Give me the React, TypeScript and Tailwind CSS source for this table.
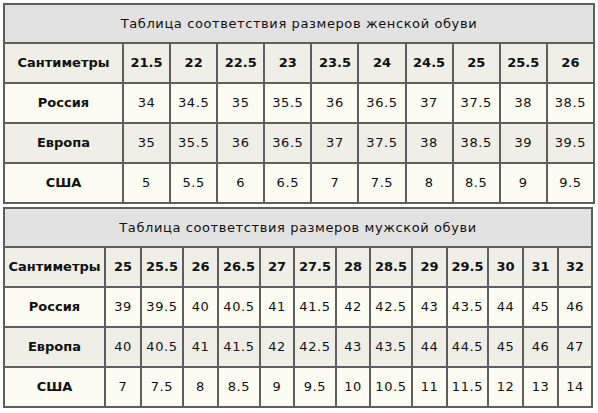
import React from "react";

const font = { fontFamily: '"DejaVu Sans", Verdana, sans-serif' };

type Row = { label: string; values: string[]; bg: string; bold?: boolean };

function SizeTable({
  title,
  rows,
  firstW,
  colW,
}: {
  title: string;
  rows: Row[];
  firstW: string;
  colW: string[];
}) {
  const n = rows[0].values.length;
  return (
    <table className="w-[590px] table-fixed border-collapse border-2 border-[#5e5e5e] text-[13px] text-[#111]">
      <colgroup>
        <col className={firstW} />
        {colW.map((c, i) => (
          <col key={i} className={c} />
        ))}
      </colgroup>
      <tbody>
        <tr className="h-[39px] bg-[#e2e2e2]">
          <td colSpan={n + 1} className="border-2 border-[#5e5e5e] text-center align-middle tracking-[0.6px]">
            {title}
          </td>
        </tr>
        {rows.map((r, ri) => (
          <tr key={ri} className={`h-[40px] ${r.bg}`}>
            <td className="border-2 border-[#5e5e5e] text-center align-middle font-bold">
              {r.label}
            </td>
            {r.values.map((v, vi) => (
              <td
                key={vi}
                className={`border-2 border-[#5e5e5e] text-center align-middle whitespace-nowrap ${
                  r.bold ? "font-bold" : "font-normal tracking-[0.6px]"
                }`}
              >
                {v}
              </td>
            ))}
          </tr>
        ))}
      </tbody>
    </table>
  );
}

export default function App() {
  const hdr = "bg-[#efefe7]";
  const cream = "bg-[#fcfcf2]";
  const women: Row[] = [
    { label: "Сантиметры", values: ["21.5", "22", "22.5", "23", "23.5", "24", "24.5", "25", "25.5", "26"], bg: hdr, bold: true },
    { label: "Россия", values: ["34", "34.5", "35", "35.5", "36", "36.5", "37", "37.5", "38", "38.5"], bg: cream },
    { label: "Европа", values: ["35", "35.5", "36", "36.5", "37", "37.5", "38", "38.5", "39", "39.5"], bg: hdr },
    { label: "США", values: ["5", "5.5", "6", "6.5", "7", "7.5", "8", "8.5", "9", "9.5"], bg: cream },
  ];
  const men: Row[] = [
    { label: "Сантиметры", values: ["25", "25.5", "26", "26.5", "27", "27.5", "28", "28.5", "29", "29.5", "30", "31", "32"], bg: hdr, bold: true },
    { label: "Россия", values: ["39", "39.5", "40", "40.5", "41", "41.5", "42", "42.5", "43", "43.5", "44", "45", "46"], bg: cream },
    { label: "Европа", values: ["40", "40.5", "41", "41.5", "42", "42.5", "43", "43.5", "44", "44.5", "45", "46", "47"], bg: hdr },
    { label: "США", values: ["7", "7.5", "8", "8.5", "9", "9.5", "10", "10.5", "11", "11.5", "12", "13", "14"], bg: cream },
  ];
  const wCols = Array(10).fill("w-[47.1px]");
  const mCols = [
    "w-[36px]", "w-[42px]", "w-[35px]", "w-[42px]", "w-[34px]", "w-[42px]", "w-[34px]",
    "w-[42px]", "w-[35px]", "w-[41px]", "w-[35px]", "w-[35px]", "w-[34px]",
  ];
  return (
    <div className="w-[598px] h-[413px] bg-white pt-[3px] pl-[3px] flex flex-col gap-[3px]" style={font}>
      <SizeTable title="Таблица соответствия размеров женской обуви" rows={women} firstW="w-[119px]" colW={wCols} />
      <SizeTable title="Таблица соответствия размеров мужской обуви" rows={men} firstW="w-[101px]" colW={mCols} />
    </div>
  );
}
